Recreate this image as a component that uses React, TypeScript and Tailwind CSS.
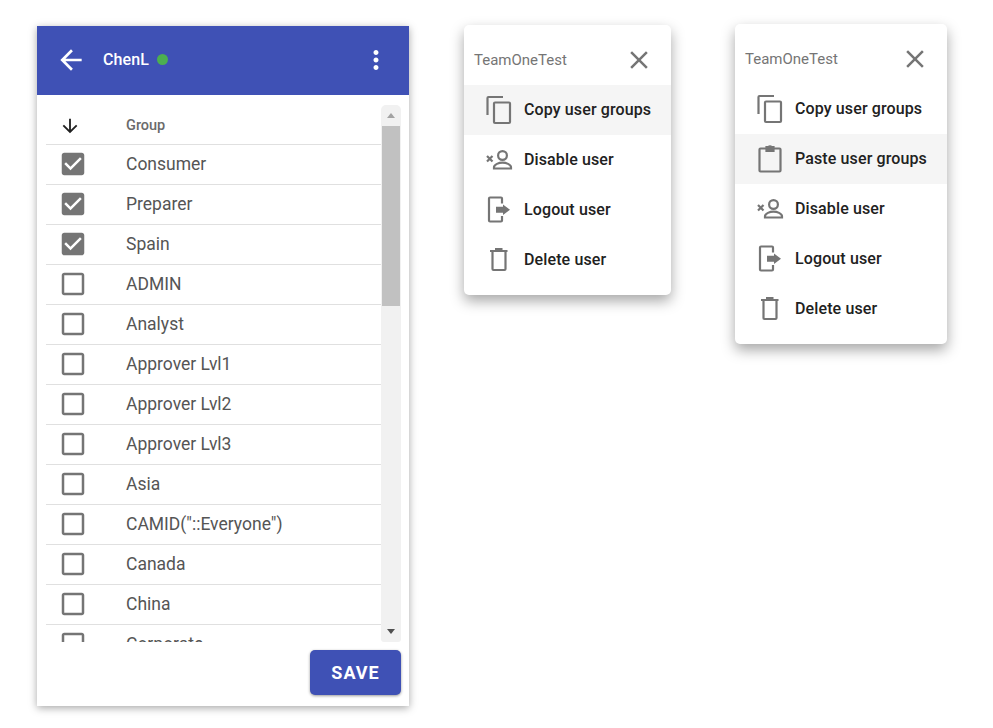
import React from "react"

const GROUPS = [
  { name: "Consumer", checked: true },
  { name: "Preparer", checked: true },
  { name: "Spain", checked: true },
  { name: "ADMIN", checked: false },
  { name: "Analyst", checked: false },
  { name: "Approver Lvl1", checked: false },
  { name: "Approver Lvl2", checked: false },
  { name: "Approver Lvl3", checked: false },
  { name: "Asia", checked: false },
  { name: 'CAMID("::Everyone")', checked: false },
  { name: "Canada", checked: false },
  { name: "China", checked: false },
  { name: "Corporate", checked: false },
]

function MaterialIcon({ d, size, className }: { d: string; size: number; className?: string }) {
  return (
    <svg width={size} height={size} viewBox="0 0 24 24" fill="currentColor" className={className}>
      <path d={d} />
    </svg>
  )
}

const ARROW_BACK = "M20 11H7.83l5.59-5.59L12 4l-8 8 8 8 1.41-1.41L7.83 13H20v-2z"
const MORE_VERT =
  "M12 8c1.1 0 2-.9 2-2s-.9-2-2-2-2 .9-2 2 .9 2 2 2zm0 2c-1.1 0-2 .9-2 2s.9 2 2 2 2-.9 2-2-.9-2-2-2zm0 6c-1.1 0-2 .9-2 2s.9 2 2 2 2-.9 2-2-.9-2-2-2z"
const CHECKED =
  "M19 3H5c-1.11 0-2 .9-2 2v14c0 1.1.89 2 2 2h14c1.11 0 2-.9 2-2V5c0-1.1-.89-2-2-2zm-9 14l-5-5 1.41-1.41L10 14.17l7.59-7.59L19 8l-9 9z"
const UNCHECKED = "M19 5v14H5V5h14m0-2H5c-1.1 0-2 .9-2 2v14c0 1.1.9 2 2 2h14c1.1 0 2-.9 2-2V5c0-1.1-.9-2-2-2z"
const ARROW_DOWN = "M20 12l-1.41-1.41L13 16.17V4h-2v12.17l-5.58-5.59L4 12l8 8 8-8z"
const CLOSE =
  "M19 6.41L17.59 5 12 10.59 6.41 5 5 6.41 10.59 12 5 17.59 6.41 19 12 13.41 17.59 19 19 17.59 13.41 12z"

function MenuGlyph({ children }: { children: React.ReactNode }) {
  return (
    <svg width="30" height="30" viewBox="0 0 30 30" fill="none" stroke="#757575" strokeWidth="2.2" className="shrink-0">
      {children}
    </svg>
  )
}

const CopyIcon = () => (
  <MenuGlyph>
    <path d="M4.5 20V3a1 1 0 0 1 1-1H20" />
    <rect x="11" y="7.5" width="16" height="20.5" rx="1" />
  </MenuGlyph>
)

const PasteIcon = () => (
  <MenuGlyph>
    <path d="M12 4.5H6.5a1 1 0 0 0-1 1v21a1 1 0 0 0 1 1h19a1 1 0 0 0 1-1v-21a1 1 0 0 0-1-1H20" />
    <path d="M12.5 7V3.2h2a1.8 1.8 0 0 1 3 0h2V7z" fill="#757575" />
  </MenuGlyph>
)

const DisableIcon = () => (
  <MenuGlyph>
    <circle cx="19.5" cy="10.5" r="4.4" />
    <path d="M11 23.5v-1.2c0-3 5-4.6 8.5-4.6s8.5 1.6 8.5 4.6v1.2z" />
    <path d="M4 11l5.5 5.5M9.5 11L4 16.5" />
  </MenuGlyph>
)

const LogoutIcon = () => (
  <MenuGlyph>
    <path d="M19 8.5V3.5a1 1 0 0 0-1-1H7a1 1 0 0 0-1 1v22a1 1 0 0 0 1 1h11a1 1 0 0 0 1-1V21" />
    <path d="M13 11.8h7V9.5l7 5.2-7 5.3v-2.2h-7z" fill="#757575" stroke="none" />
  </MenuGlyph>
)

const DeleteIcon = () => (
  <MenuGlyph>
    <path d="M7 6h17.5M12 4h7.5" />
    <path d="M9.5 7v17a1 1 0 0 0 1 1h11a1 1 0 0 0 1-1V7" />
  </MenuGlyph>
)

function UserMenu({
  items,
  activeLabel,
  className,
}: {
  items: { label: string; icon: React.ReactNode }[]
  activeLabel: string
  className: string
}) {
  return (
    <div className={`bg-white rounded-[5px] pb-2.5 shadow-[0_6px_14px_rgba(0,0,0,0.35)] ${className}`}>
      <div className="h-[60px] pt-[9px] pl-2.5 pr-[17px] flex items-center justify-between">
        <span className="mt-0.5 text-[15px] text-[#757575]">TeamOneTest</span>
        <MaterialIcon d={CLOSE} size={30} className="text-[#757575]" />
      </div>
      {items.map((item) => (
        <div
          key={item.label}
          className={`h-[50px] pl-[19px] flex items-center gap-[11px] ${item.label === activeLabel ? "bg-[#f5f5f5]" : ""}`}
        >
          {item.icon}
          <span className="text-[16px] font-[480] text-[#212121] tracking-[0.12px] whitespace-nowrap">{item.label}</span>
        </div>
      ))}
    </div>
  )
}

const copyItem = { label: "Copy user groups", icon: <CopyIcon /> }
const pasteItem = { label: "Paste user groups", icon: <PasteIcon /> }
const disableItem = { label: "Disable user", icon: <DisableIcon /> }
const logoutItem = { label: "Logout user", icon: <LogoutIcon /> }
const deleteItem = { label: "Delete user", icon: <DeleteIcon /> }

export default function App() {
  return (
    <div className="min-h-[728px] bg-white flex items-start pt-6 font-['Roboto',sans-serif]">
      {/* User groups panel */}
      <div className="ml-[37px] mt-0.5 w-[372px] h-[680px] bg-white flex flex-col shrink-0 shadow-[0_2px_8px_rgba(0,0,0,0.35)]">
        <div className="h-[69px] bg-[#3f51b5] flex items-center text-white shrink-0 pb-[2px]">
          <MaterialIcon d={ARROW_BACK} size={32} className="ml-[18px]" />
          <span className="ml-4 text-[16px] font-medium tracking-[0.1px]">ChenL</span>
          <span className="ml-2 w-[11px] h-[11px] rounded-full bg-[#4caf50]" />
          <MaterialIcon d={MORE_VERT} size={30} className="ml-auto mr-[18px]" />
        </div>

        <div className="mt-2.5 mr-2 ml-[9px] h-[537px] flex overflow-hidden">
          <div className="flex-1 min-w-0">
            <div className="h-[40px] pt-[2px] flex items-center border-b border-[#e0e0e0]">
              <MaterialIcon d={ARROW_DOWN} size={22} className="ml-[13px] text-[#212121] shrink-0" />
              <span className="ml-[45px] text-[14.5px] font-[550] text-[#6b6b6b]">Group</span>
            </div>
            {GROUPS.map((group) => (
              <div key={group.name} className="h-[40px] pb-px flex items-center border-b border-[#e0e0e0]">
                <MaterialIcon d={group.checked ? CHECKED : UNCHECKED} size={30} className="ml-3 text-[#757575] shrink-0" />
                <span className="ml-[38px] text-[17.5px] text-[#555555]">{group.name}</span>
              </div>
            ))}
          </div>

          {/* Scrollbar */}
          <div className="w-5 bg-[#f1f1f1] rounded-t-[5px] rounded-b-[3px] flex flex-col items-center shrink-0">
            <div className="h-[21px] flex items-center justify-center">
              <div className="w-0 h-0 border-x-[4.5px] border-x-transparent border-b-[5px] border-b-[#a3a3a3]" />
            </div>
            <div className="w-[18px] h-[180px] bg-[#c1c1c1]" />
            <div className="mt-auto h-[21px] flex items-center justify-center">
              <div className="w-0 h-0 border-x-[4.5px] border-x-transparent border-t-[5px] border-t-[#505050]" />
            </div>
          </div>
        </div>

        <div className="pt-2 pr-2 flex justify-end">
          <button className="w-[91px] h-[45px] rounded-[5px] bg-[#3f51b5] text-white text-[18px] font-bold tracking-[1px] shadow-[0_1px_3px_rgba(0,0,0,0.4)]">
            SAVE
          </button>
        </div>
      </div>

      <UserMenu
        className="ml-[55px] mt-px w-[207px] shrink-0"
        activeLabel="Copy user groups"
        items={[copyItem, disableItem, logoutItem, deleteItem]}
      />
      <UserMenu
        className="ml-[64px] w-[212px] shrink-0"
        activeLabel="Paste user groups"
        items={[copyItem, pasteItem, disableItem, logoutItem, deleteItem]}
      />
    </div>
  )
}
